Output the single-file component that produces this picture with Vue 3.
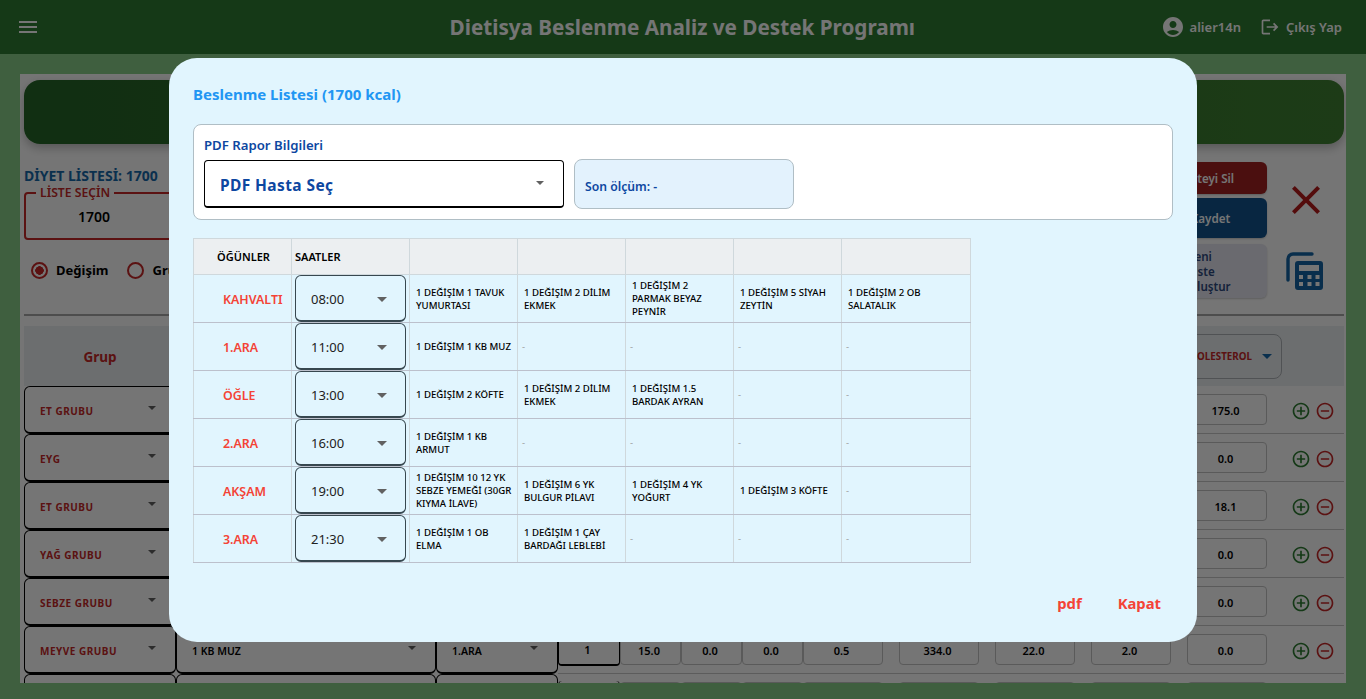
<script setup>
const rows = [
  { group: 'ET GRUBU', food: '', meal: '', qty: '', nums: ['', '', '', ''], extra: ['', '', '', '175.0'] },
  { group: 'EYG', food: '', meal: '', qty: '', nums: ['', '', '', ''], extra: ['', '', '', '0.0'] },
  { group: 'ET GRUBU', food: '', meal: '', qty: '', nums: ['', '', '', ''], extra: ['', '', '', '18.1'] },
  { group: 'YAĞ GRUBU', food: '', meal: '', qty: '', nums: ['', '', '', ''], extra: ['', '', '', '0.0'] },
  { group: 'SEBZE GRUBU', food: '', meal: '', qty: '', nums: ['', '', '', ''], extra: ['', '', '', '0.0'] },
  { group: 'MEYVE GRUBU', food: '1 KB MUZ', meal: '1.ARA', qty: '1', nums: ['15.0', '0.0', '0.0', '0.5'], extra: ['334.0', '22.0', '2.0', '0.0'] },
  { group: '', food: '', meal: '', qty: '', nums: ['', '', '', ''], extra: ['', '', '', ''] },
]

const meals = [
  { name: 'KAHVALTI', time: '08:00', items: ['1 DEĞİŞİM 1 TAVUK YUMURTASI', '1 DEĞİŞİM 2 DİLİM EKMEK', '1 DEĞİŞİM 2 PARMAK BEYAZ PEYNİR', '1 DEĞİŞİM 5 SİYAH ZEYTİN', '1 DEĞİŞİM 2 OB SALATALIK'] },
  { name: '1.ARA', time: '11:00', items: ['1 DEĞİŞİM 1 KB MUZ', '-', '-', '-', '-'] },
  { name: 'ÖĞLE', time: '13:00', items: ['1 DEĞİŞİM 2 KÖFTE', '1 DEĞİŞİM 2 DİLİM EKMEK', '1 DEĞİŞİM 1.5 BARDAK AYRAN', '-', '-'] },
  { name: '2.ARA', time: '16:00', items: ['1 DEĞİŞİM 1 KB ARMUT', '-', '-', '-', '-'] },
  { name: 'AKŞAM', time: '19:00', items: ['1 DEĞİŞİM 10 12 YK SEBZE YEMEĞİ (30GR KIYMA İLAVE)', '1 DEĞİŞİM 6 YK BULGUR PİLAVI', '1 DEĞİŞİM 4 YK YOĞURT', '1 DEĞİŞİM 3 KÖFTE', '-'] },
  { name: '3.ARA', time: '21:30', items: ['1 DEĞİŞİM 1 OB ELMA', '1 DEĞİŞİM 1 ÇAY BARDAĞI LEBLEBİ', '-', '-', '-'] },
]
</script>

<template>
  <div class="app">
    <header class="topbar">
      <svg class="menu-icon" viewBox="0 0 24 24"><path d="M3 18h18v-2H3v2zm0-5h18v-2H3v2zm0-7v2h18V6H3z" /></svg>
      <h1 class="app-title">Dietisya Beslenme Analiz ve Destek Programı</h1>
      <div class="user">
        <svg class="user-icon" viewBox="0 0 24 24"><path d="M12 2C6.48 2 2 6.48 2 12s4.48 10 10 10 10-4.48 10-10S17.52 2 12 2zm0 4c1.93 0 3.5 1.57 3.5 3.5S13.93 13 12 13s-3.5-1.57-3.5-3.5S10.07 6 12 6zm0 14c-2.03 0-4.43-.82-6.14-2.88C7.55 15.8 9.68 15 12 15s4.45.8 6.14 2.12C16.43 19.18 14.03 20 12 20z" /></svg>
        <span class="user-name">alier14n</span>
        <svg class="logout-icon" viewBox="0 0 24 24"><path d="M17 7l-1.41 1.41L18.17 11H8v2h10.17l-2.58 2.58L17 17l5-5zM4 5h8V3H4c-1.1 0-2 .9-2 2v14c0 1.1.9 2 2 2h8v-2H4V5z" /></svg>
        <span class="logout-text">Çıkış Yap</span>
      </div>
    </header>

    <main class="page">
      <div class="panel">
        <div class="banner"></div>

        <div class="toolbar">
          <div class="tool-left">
            <div class="list-title">DİYET LİSTESİ: 1700</div>
            <fieldset class="list-select">
              <legend>LİSTE SEÇİN</legend>
              <span>1700</span>
            </fieldset>
            <div class="radios">
              <span class="radio on"></span><span class="radio-label">Değişim</span>
              <span class="radio"></span><span class="radio-label">Grup</span>
            </div>
          </div>
          <div class="tool-right">
            <div class="tool-buttons">
              <button class="btn btn-del">Listeyi Sil</button>
              <button class="btn btn-save">Kaydet</button>
              <button class="btn btn-new">Yeni<br>Liste<br>Oluştur</button>
            </div>
            <div class="tool-icons">
              <svg class="close-icon" viewBox="0 0 24 24"><path d="M19 6.41 17.59 5 12 10.59 6.41 5 5 6.41 10.59 12 5 17.59 6.41 19 12 13.41 17.59 19 19 17.59 13.41 12z" /></svg>
              <svg class="calc-icon" viewBox="0 0 37 38">
                <path d="M2 28V7a5 5 0 0 1 5-5h19" fill="none" stroke="#1565a5" stroke-width="3.4" stroke-linecap="round" />
                <path fill-rule="evenodd" d="M12 9h22a3 3 0 0 1 3 3v23a3 3 0 0 1-3 3H12a3 3 0 0 1-3-3V12a3 3 0 0 1 3-3zm1 4v6h20v-6H13zm0 10v4h4v-4h-4zm8.500 0v4h4v-4h-4zm8 0v4h4v-4h-4zm-16.500 7v4h4v-4h-4zm8.500 0v4h4v-4h-4zm8 0v4h4v-4h-4z" fill="#1565a5" />
              </svg>
            </div>
          </div>
        </div>

        <div class="divider"></div>

        <div class="table-head">
          <div class="head-group">Grup</div>
          <div class="head-pill"><span>KOLESTEROL</span><i class="caret caret-blue"></i></div>
        </div>

        <div v-for="(r, i) in rows" :key="i" class="row">
          <div class="sel sel-group"><span>{{ r.group }}</span><i class="caret"></i></div>
          <div class="sel sel-food"><span>{{ r.food }}</span><i class="caret"></i></div>
          <div class="sel sel-meal"><span>{{ r.meal }}</span><i class="caret"></i></div>
          <div class="row-right">
            <div class="qty">{{ r.qty }}</div>
            <div class="nums">
              <div v-for="(n, j) in r.nums" :key="j" class="num">{{ n }}</div>
            </div>
            <div class="extras">
              <div v-for="(n, j) in r.extra" :key="j" class="num">{{ n }}</div>
            </div>
            <div class="actions">
              <svg class="act act-add" viewBox="0 0 24 24"><path d="M13 7h-2v4H7v2h4v4h2v-4h4v-2h-4V7zm-1-5C6.480 2 2 6.480 2 12s4.480 10 10 10 10-4.480 10-10S17.520 2 12 2zm0 18c-4.410 0-8-3.590-8-8s3.590-8 8-8 8 3.590 8 8-3.590 8-8 8z" /></svg>
              <svg class="act act-del" viewBox="0 0 24 24"><path d="M7 11v2h10v-2H7zm5-9C6.480 2 2 6.480 2 12s4.480 10 10 10 10-4.480 10-10S17.520 2 12 2zm0 18c-4.410 0-8-3.590-8-8s3.590-8 8-8 8 3.590 8 8-3.590 8-8 8z" /></svg>
            </div>
          </div>
        </div>
      </div>
    </main>

    <div class="scrim">
      <div class="dialog" role="dialog">
        <h2 class="dialog-title">Beslenme Listesi (1700 kcal)</h2>

        <section class="pdf-card">
          <div class="pdf-label">PDF Rapor Bilgileri</div>
          <div class="pdf-row">
            <div class="pdf-select"><span>PDF Hasta Seç</span><i class="caret"></i></div>
            <div class="pdf-last">Son ölçüm: -</div>
          </div>
        </section>

        <table class="meals">
          <colgroup>
            <col class="c-meal"><col class="c-time"><col class="c-item"><col class="c-item"><col class="c-item"><col class="c-item"><col class="c-last">
          </colgroup>
          <thead>
            <tr>
              <th class="th-meal">ÖĞÜNLER</th>
              <th>SAATLER</th>
              <th v-for="n in 5" :key="n"></th>
            </tr>
          </thead>
          <tbody>
            <tr v-for="m in meals" :key="m.name">
              <td class="td-meal">{{ m.name }}</td>
              <td class="td-time">
                <div class="time-select"><span>{{ m.time }}</span><i class="caret"></i></div>
              </td>
              <td v-for="(it, k) in m.items" :key="k" :class="{ empty: it === '-' }">{{ it }}</td>
            </tr>
          </tbody>
        </table>

        <div class="dialog-actions">
          <button class="text-btn">pdf</button>
          <button class="text-btn">Kapat</button>
        </div>
      </div>
    </div>
  </div>
</template>

<style scoped>
.app {
  height: 699px;
  overflow: hidden;
  background: #89cf89;
  font-family: "Noto Sans", "Open Sans", sans-serif;
}

.topbar {
  height: 54px;
  display: flex;
  align-items: center;
  padding: 0 24px 0 16px;
  background: #2e7d32;
  color: #fff;
  box-sizing: border-box;
}
.menu-icon { width: 24px; height: 24px; fill: #fff; }
.app-title {
  flex: 1;
  margin: 0;
  text-align: center;
  font-size: 20.7px;
  font-weight: 700;
  padding-left: 164px;
}
.user { display: flex; align-items: center; font-size: 13px; font-weight: 600; }
.user-icon { width: 24px; height: 24px; fill: #fff; }
.user-name { margin: 0 19px 0 5px; }
.logout-icon { width: 20px; height: 20px; fill: #fff; margin-right: 6px; }

.page { padding: 20px 20px 0; }
.panel {
  height: 609px;
  overflow: hidden;
  background: #fff;
  padding: 6px 2px 0 4px;
  box-sizing: border-box;
}

.banner {
  height: 64px;
  border-radius: 16px;
  background: linear-gradient(90deg, #266628, #3f8232);
  box-shadow: 0 4px 10px rgba(0, 0, 0, 0.25);
}

.toolbar { height: 170px; display: flex; justify-content: space-between; }
.tool-left { padding-top: 24px; }
.list-title { font-size: 14px; font-weight: 700; color: #1769aa; line-height: 16px; }
.list-select {
  width: 190px;
  height: 53px;
  margin: 3px 0 0;
  padding: 0 0 0 52px;
  box-sizing: border-box;
  border: 2px solid #c62828;
  border-radius: 4px;
  font-size: 14px;
  font-weight: 600;
  line-height: 36px;
  color: #000;
}
.list-select legend {
  margin-left: -42px;
  padding: 0 4px;
  font-size: 12.2px;
  font-weight: 600;
  line-height: 12px;
  color: #c62828;
}
.radios { display: flex; align-items: center; margin-top: 21px; padding-left: 7px; }
.radio {
  width: 13px;
  height: 13px;
  border: 2px solid #c62828;
  border-radius: 50%;
  box-sizing: content-box;
}
.radio.on { background: radial-gradient(circle, #c62828 0 4px, transparent 4.5px); }
.radio-label { font-size: 13px; font-weight: 700; margin: 0 19px 0 8px; color: #000; }

.tool-right { display: flex; padding-top: 18px; }
.tool-buttons { width: 120px; display: flex; flex-direction: column; gap: 4px; }
.btn {
  border: none;
  border-radius: 6px;
  font-family: inherit;
  font-size: 11.6px;
  font-weight: 600;
  color: #fff;
  padding: 0;
  box-shadow: 0 1px 2px rgba(0, 0, 0, 0.2);
}
.btn-del { height: 32px; padding-left: 2px; background: #a32222; }
.btn-save { height: 40px; margin-bottom: 2px; padding-left: 7px; background: #12538f; }
.btn-new { height: 54px; background: #e8e8f2; color: #2f4a80; line-height: 15px; text-align: left; padding-left: 41px; }
.tool-icons { width: 77px; display: flex; flex-direction: column; align-items: center; padding-top: 14px; }
.close-icon { width: 48px; height: 48px; fill: #b71c1c; }
.calc-icon { width: 37px; height: 38px; margin: 28px 2px 0 0; }

.divider { height: 2px; background: #a8a8a8; }

.table-head {
  height: 60px;
  margin-top: 10px;
  display: flex;
  align-items: center;
  justify-content: space-between;
  background: #eceff1;
}
.head-group { width: 152px; padding-top: 2px; text-align: center; font-size: 13.5px; font-weight: 700; color: #c62828; }
.head-pill {
  width: 140px;
  height: 45px;
  margin-right: 62px;
  display: flex;
  align-items: center;
  justify-content: flex-end;
  gap: 10px;
  padding-right: 9px;
  box-sizing: border-box;
  border: 1px solid #aeb4b8;
  border-radius: 8px;
  font-size: 9.8px;
  font-weight: 700;
  color: #c62828;
}

.row { display: flex; height: 48px; }
.sel {
  display: flex;
  align-items: center;
  justify-content: space-between;
  height: 48px;
  padding: 0 19px 0 15px;
  box-sizing: border-box;
  border: 1px solid #000;
  border-bottom-width: 2px;
  border-radius: 6px;
  font-size: 10.5px;
  font-weight: 600;
  color: #000;
}
.sel span { padding-top: 2px; }
.sel-group { width: 152px; font-size: 10px; color: #c62828; font-weight: 700; letter-spacing: 0.5px; }
.sel-food { width: 260px; }
.sel-meal { width: 122px; }
.sel .caret {
  margin-top: -4px;
  border-left-width: 4px;
  border-right-width: 4px;
  border-top-width: 4px;
}

.caret {
  display: block;
  width: 0;
  height: 0;
  border-left: 5px solid transparent;
  border-right: 5px solid transparent;
  border-top: 5px solid #616161;
}
.caret-blue { border-top-color: #1769aa; }

.row-right {
  flex: 1;
  display: flex;
  align-items: center;
  border-bottom: 1px solid #c8c8c8;
  box-sizing: border-box;
}
.num, .qty {
  display: flex;
  align-items: center;
  justify-content: center;
  height: 31px;
  padding: 2px 3px 0 0;
  box-sizing: border-box;
  border: 1px solid #c4c4c4;
  border-radius: 4px;
  font-size: 11px;
  font-weight: 600;
  color: #000;
}
.qty { width: 62px; height: 33px; border-color: #000; border-width: 0 1px 2px; }
.nums { display: flex; }
.nums .num { width: 61px; }
.nums .num:last-child { width: 80px; }
.extras { display: flex; gap: 16px; margin-left: 16px; }
.extras .num { width: 80px; }
.actions { display: flex; gap: 4px; margin: 2px 0 0 24px; }
.act { width: 20px; height: 20px; }
.act-add { fill: #2e7d32; }
.act-del { fill: #c62828; }

.scrim {
  position: fixed;
  inset: 0;
  display: flex;
  align-items: flex-start;
  justify-content: center;
  padding-top: 58px;
  box-sizing: border-box;
  background: rgba(0, 0, 0, 0.54);
}
.dialog {
  width: 1028px;
  height: 584px;
  padding: 24px 24px 19px;
  box-sizing: border-box;
  display: flex;
  flex-direction: column;
  border-radius: 28px;
  background: #e1f5fe;
}
.dialog-title {
  margin: 0;
  font-size: 15px;
  line-height: 24px;
  font-weight: 700;
  color: #2196f3;
}

.pdf-card {
  height: 96px;
  margin-top: 18px;
  padding: 11px 10px 0;
  box-sizing: border-box;
  background: #fff;
  border: 1px solid #b0bec5;
  border-radius: 8px;
}
.pdf-label { font-size: 13.2px; font-weight: 600; line-height: 18px; color: #0d47a1; }
.pdf-row { display: flex; align-items: center; gap: 10px; margin-top: 5px; }
.pdf-select {
  width: 360px;
  height: 48px;
  display: flex;
  align-items: center;
  justify-content: space-between;
  padding: 0 19px 0 15px;
  box-sizing: border-box;
  border: 1px solid #000;
  border-bottom-width: 2px;
  border-radius: 4px;
  font-size: 15.5px;
  font-weight: 700;
  letter-spacing: 0.4px;
  color: #0d47a1;
}
.pdf-select span { padding-top: 2px; }
.pdf-select .caret {
  margin-top: -1px;
  border-left-width: 4px;
  border-right-width: 4px;
  border-top-width: 4px;
}
.pdf-last {
  width: 220px;
  height: 50px;
  display: flex;
  align-items: center;
  padding: 4px 0 0 10px;
  box-sizing: border-box;
  background: #e3f2fd;
  border: 1px solid #b0bec5;
  border-radius: 8px;
  font-size: 12.2px;
  font-weight: 600;
  color: #0d47a1;
}

.meals {
  width: 777px;
  margin-top: 18px;
  border-collapse: collapse;
  table-layout: fixed;
  color: #000;
}
.c-meal { width: 98px; }
.c-time { width: 118px; }
.c-item { width: 108px; }
.c-last { width: 129px; }
.meals th {
  height: 36px;
  padding: 0 3px;
  box-sizing: border-box;
  text-align: left;
  background: #eceff1;
  border: 1px solid #cfd8dc;
  font-size: 11px;
  font-weight: 600;
}
.meals th.th-meal { padding-left: 5px; text-align: center; }
.meals td {
  height: 48px;
  padding: 0 5px 0 6px;
  box-sizing: border-box;
  border: 1px solid #cfd8dc;
  border-top-color: #bcc0cc;
  border-bottom-color: #bcc0cc;
  font-size: 9.6px;
  font-weight: 500;
  line-height: 13px;
}
.meals td.empty { color: #9e9e9e; font-weight: 400; padding-left: 4px; }
.meals td.td-meal {
  padding: 2px 0 0 29px;
  font-size: 12.4px;
  font-weight: 600;
  color: #f44336;
}
.meals td.td-time { padding: 0 3px; }
.time-select {
  height: 47px;
  display: flex;
  align-items: center;
  justify-content: space-between;
  padding: 2px 18px 0 15px;
  box-sizing: border-box;
  border: 1.5px solid #37474f;
  border-bottom-width: 2px;
  border-radius: 6px;
  font-size: 13px;
  font-weight: 400;
  color: #212121;
}

.dialog-actions {
  margin-top: auto;
  display: flex;
  justify-content: flex-end;
  gap: 12px;
}
.text-btn {
  height: 40px;
  padding: 0 12px;
  border: none;
  background: transparent;
  font-family: inherit;
  font-size: 14.8px;
  font-weight: 700;
  color: #f44336;
}
</style>

<style>
html, body { margin: 0; overflow: hidden; }
</style>
